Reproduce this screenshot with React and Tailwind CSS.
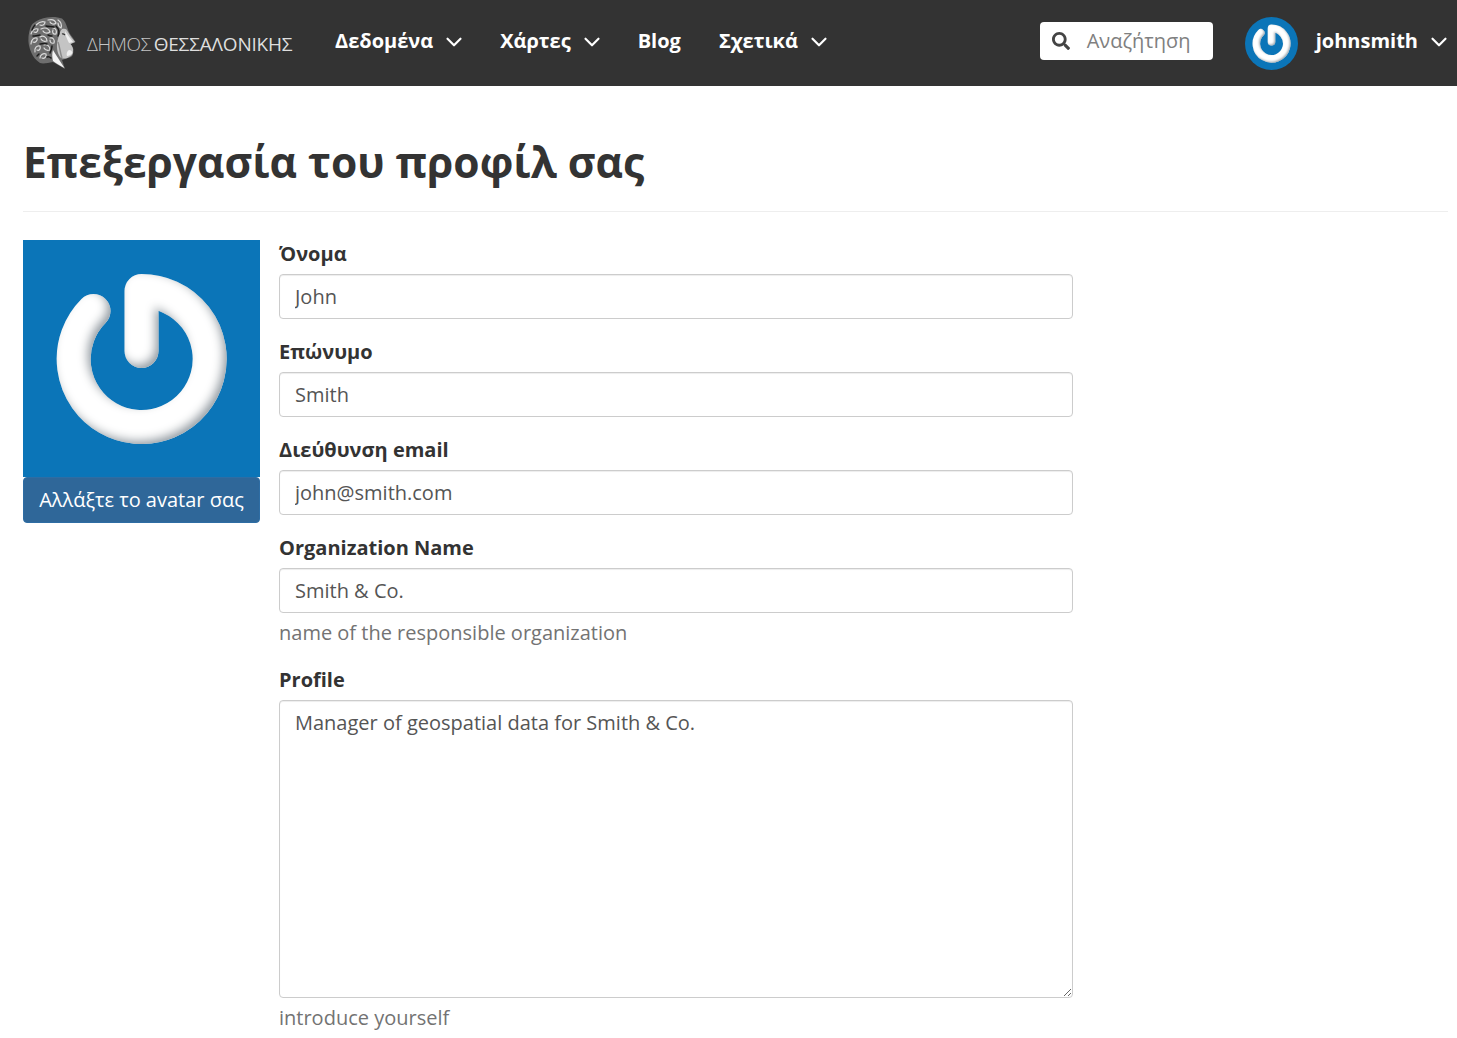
import { ChevronDown } from "lucide-react"
import { FaSearch } from "react-icons/fa"

function PowerAvatar({ className }) {
    return (
        <svg viewBox="0 0 237 237" className={className}>
            <defs>
                <filter id="ringShade" x="-20%" y="-20%" width="140%" height="140%">
                    <feGaussianBlur in="SourceAlpha" stdDeviation="5" result="blur" />
                    <feOffset in="blur" dx="-4" dy="-4" result="offset" />
                    <feComposite in="SourceAlpha" in2="offset" operator="out" result="edge" />
                    <feFlood floodColor="#7f8c96" floodOpacity="0.9" />
                    <feComposite in2="edge" operator="in" result="shade" />
                    <feMerge>
                        <feMergeNode in="SourceGraphic" />
                        <feMergeNode in="shade" />
                    </feMerge>
                </filter>
            </defs>
            <rect width="237" height="237" fill="#0b75b8" />
            <path
                d="M70.5 71 A68 68 0 1 0 118.5 51 L118.5 111"
                fill="none"
                stroke="#ffffff"
                strokeWidth="34"
                strokeLinecap="round"
                strokeLinejoin="round"
                filter="url(#ringShade)"
            />
        </svg>
    )
}

// coin portrait from the logo
function CoinHead() {
    return (
        <svg viewBox="0 0 48 53" className="w-[48px] h-[53px] shrink-0">
            <defs>
                <filter id="coinSoft">
                    <feGaussianBlur stdDeviation="0.35" />
                </filter>
            </defs>
            <g filter="url(#coinSoft)">
                <path d="M19 0.5 C24 -0.5 30 0 34 1.5 C37 4 38 7 39 10 C40 13 41 15 42 17 C44 20 46 22 47.5 25 L42.5 27 C44 29 45.5 31 45.5 33 C45.5 35 45 37 44.5 38.5 C43 40.5 41 41 38.5 41.5 L34 43 L37 52 C33 50 29 47 25 45 C20 46 15 47 12 46 C8 43 5 40 3.5 36 C1 31 0 25 0.5 20 C1 14 2.5 9 5 6.5 C9 3 14 1 19 0.5 Z" fill="#6e6e6e" />
                <path d="M34 12 C37 11 39 12 40 15 C42 19 45 22 47 25 L42.5 27 C44 29 45.5 31 45 34 C45 37 44 39 41 40 C38 42 34 42 32 40 C29 36 28 28 30 22 C31 18 32 14 34 12 Z" fill="#c4c4c4" />
                <path d="M37 14 C39 17 42 21 45 25 L41 26 C39 22 37 18 37 14 Z M41 33 C43 33 44 34 44.5 36 C43 38 41 39 39 39 C38 37 39 34 41 33 Z" fill="#efefef" />
                <path d="M25 33 C28 38 32 44 36.5 51 C32 49 28 46 25 44 C24 40 24 36 25 33 Z" fill="#f4f4f4" />
                <path d="M30 25 C32 30 32 36 34 41" fill="none" stroke="#8a8a8a" strokeWidth="1.4" />
                <path d="M34 17 C35 16.5 36 17 37 18" fill="none" stroke="#333333" strokeWidth="1.2" />
                <g fill="none" stroke="#dcdcdc" strokeWidth="1.2" strokeLinecap="round">
                    <path d="M8 8 C11 5 14 4 17 5 C17 8 14 9 12 8" />
                    <path d="M20 3 C24 2 27 3 28 6 C26 8 23 7 22 5" />
                    <path d="M30 3 C33 5 34 8 33 11 C31 10 30 8 30 6" />
                    <path d="M3 17 C4 13 7 11 10 12 C10 15 8 16 6 15" />
                    <path d="M13 12 C17 10 21 11 22 15 C19 17 16 16 15 14" />
                    <path d="M25 11 C28 11 29 14 28 17 C25 18 24 15 25 13" />
                    <path d="M3 27 C3 23 6 20 9 21 C10 24 7 26 5 25" />
                    <path d="M12 20 C15 18 19 20 19 24 C16 25 14 24 13 22" />
                    <path d="M22 21 C25 20 27 23 26 26 C23 27 22 25 22 23" />
                    <path d="M7 35 C6 31 9 28 12 29 C13 32 11 34 9 33" />
                    <path d="M16 28 C19 27 22 29 22 33 C19 34 17 33 16 31" />
                    <path d="M12 41 C12 38 15 36 18 37 C19 40 16 42 14 41" />
                </g>
                <g fill="none" stroke="#1e1e1e" strokeWidth="1.5" strokeLinecap="round">
                    <path d="M18 9 C21 10 24 9 26 10 M5 19 C8 19 10 18 12 18 M20 18 C22 19 24 19 24 19 M12 27 C14 27 16 26 19 27 M24 29 C24 32 23 33 22 36 M19 40 C21 39 22 40 23 41 M9 39 C10 38 10 38 11 37 M28 9 C31 12 32 15 30 19 M7 8 C5 10 5 11 4 13" />
                </g>
            </g>
        </svg>
    )
}

function NavLink({ label, arrow = true }) {
    return (
        <a className="flex items-center gap-[8px] text-white text-xl font-bold">
            {label}
            {arrow && <ChevronDown size={26} strokeWidth={2} className="text-white mt-0.5" />}
        </a>
    )
}

function Field({ label, value, help }) {
    return (
        <div className={help ? "mb-[20px]" : "mb-[19px]"}>
            <label className="block text-xl leading-[27px] font-bold text-[#333333] mb-[7px]">{label}</label>
            <input
                readOnly
                value={value}
                className="block w-full h-[45px] px-[15px] text-xl text-[#555555] bg-white border border-[#cccccc] rounded-[4px] shadow-[inset_0_1px_1px_rgba(0,0,0,0.075)] outline-none"
            />
            {help && <p className="text-xl leading-[27px] text-[#737373] mt-[6px]">{help}</p>}
        </div>
    )
}

export default function App() {
    return (
        <div className="font-['Open_Sans',sans-serif] h-[1038px] overflow-hidden bg-white">
            <nav className="h-[86px] bg-[#333333] flex items-center pl-[28px] pr-[5px]">
                <a className="flex items-center w-[265px] shrink-0">
                    <CoinHead />
                    <span className="ml-[11px] mt-[3px] whitespace-nowrap text-[19px]">
                        <span className="font-light text-[#c4c4c4] tracking-[-0.45px]">ΔΗΜΟΣ</span>
                        <span className="font-medium text-[#dedede] tracking-[-0.2px] ml-[3px]">ΘΕΣΣΑΛΟΝΙΚΗΣ</span>
                    </span>
                </a>
                <div className="flex items-center gap-[33px] ml-[42px] pb-1">
                    <NavLink label="Δεδομένα" />
                    <NavLink label="Χάρτες" />
                    <a className="text-white text-xl font-bold pr-[5px]">Blog</a>
                    <NavLink label="Σχετικά" />
                </div>
                <div className="ml-auto flex items-center">
                    <div className="w-[173px] h-[38px] mb-1 bg-white rounded-[4px] flex items-center pl-[12px]">
                        <FaSearch size={18} className="text-[#444444] shrink-0" />
                        <span className="ml-[17px] text-xl text-[#808080]">Αναζήτηση</span>
                    </div>
                    <PowerAvatar className="w-[53px] h-[53px] rounded-full ml-[32px]" />
                    <span className="ml-[18px] mb-1 text-xl font-bold text-white">johnsmith</span>
                    <ChevronDown size={26} strokeWidth={2} className="text-white ml-[8px] mb-0.5" />
                </div>
            </nav>

            <main className="pl-[23px] pr-[9px]">
                <div className="h-[126px] pt-[46px] border-b border-[#eeeeee]">
                    <h1 className="text-[42.5px] leading-[60px] font-bold text-[#333333]">Επεξεργασία του προφίλ σας</h1>
                </div>
                <div className="flex pt-[28px]">
                    <div className="w-[237px] shrink-0">
                        <PowerAvatar className="block w-[237px] h-[237px]" />
                        <button className="block w-full h-[46px] bg-[#2f6799] border border-[#2e6da4] text-white text-xl rounded-[4px]">
                            Αλλάξτε το avatar σας
                        </button>
                    </div>
                    <form className="w-[794px] ml-[19px]">
                        <Field label="Όνομα" value="John" />
                        <Field label="Επώνυμο" value="Smith" />
                        <Field label="Διεύθυνση email" value="john@smith.com" />
                        <Field label="Organization Name" value="Smith & Co." help="name of the responsible organization" />
                        <div>
                            <label className="block text-xl leading-[27px] font-bold text-[#333333] mb-[7px]">Profile</label>
                            <textarea
                                readOnly
                                value="Manager of geospatial data for Smith & Co."
                                className="block w-full h-[298px] px-[15px] py-[8px] text-xl leading-[27px] text-[#555555] bg-white border border-[#cccccc] rounded-[4px] shadow-[inset_0_1px_1px_rgba(0,0,0,0.075)] outline-none"
                            />
                            <p className="text-xl leading-[27px] text-[#737373] mt-[6px]">introduce yourself</p>
                        </div>
                    </form>
                </div>
            </main>
        </div>
    )
}
